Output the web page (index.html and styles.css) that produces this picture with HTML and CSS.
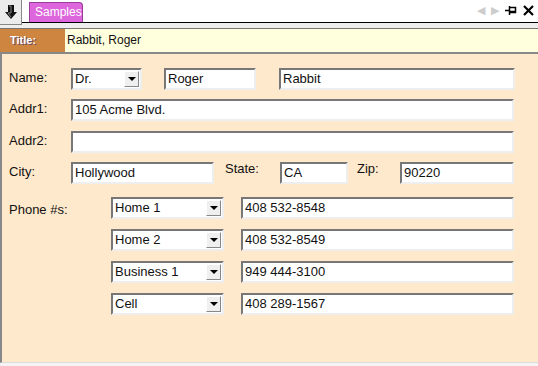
FILE: index.html
```html
<!DOCTYPE html>
<html lang="en">

<head>
    <meta charset="utf-8">
    <link rel="stylesheet" href="styles.css">
</head>

<body>
    <div class="topbar">
        <div class="dropbtn">
            <svg width="14" height="16" viewBox="0 0 14 16">
                <path d="M4 1h6v7h3l-6 7-6-7h3z" fill="#111"/>
                <path d="M5 2h2v7H4l3 4" fill="none" stroke="#888" stroke-width="1"/>
            </svg>
        </div>
        <div class="tab">Samples</div>
        <div class="tools">
            <span class="nav off">&#9664;</span>
            <span class="nav off">&#9654;</span>
            <svg class="pin" width="12" height="11" viewBox="0 0 12 11">
                <path d="M0 5.5h4M4.5 1v9M4.5 2.5h6v5h-6M4.5 6.5h6" fill="none" stroke="#000" stroke-width="1.5"/>
            </svg>
            <svg class="close" width="11" height="11" viewBox="0 0 11 11">
                <path d="M1 1l9 9M10 1l-9 9" stroke="#000" stroke-width="2.2"/>
            </svg>
        </div>
    </div>
    <div class="strip"></div>
    <div class="titlebar">
        <div class="tlabel">Title:</div>
        <div class="tvalue">Rabbit, Roger</div>
    </div>

    <div class="panel">
        <div class="row">
            <label class="lbl">Name:</label>
            <div class="select w-title"><span>Dr.</span><i class="arrow"></i></div>
            <div class="field w-first">Roger</div>
            <div class="field w-last">Rabbit</div>
        </div>
        <div class="row">
            <label class="lbl">Addr1:</label>
            <div class="field w-full">105 Acme Blvd.</div>
        </div>
        <div class="row row-gap">
            <label class="lbl">Addr2:</label>
            <div class="field w-full"></div>
        </div>
        <div class="row">
            <label class="lbl">City:</label>
            <div class="field w-city">Hollywood</div>
            <label class="lbl-up state">State:</label>
            <div class="field w-state">CA</div>
            <label class="lbl-up zip">Zip:</label>
            <div class="field w-zip">90220</div>
        </div>
        <div class="phones">
            <label class="lbl phone-lbl">Phone #s:</label>
            <div class="phone-list">
                <div class="prow">
                    <div class="select w-type"><span>Home 1</span><i class="arrow"></i></div>
                    <div class="field w-num">408 532-8548</div>
                </div>
                <div class="prow">
                    <div class="select w-type"><span>Home 2</span><i class="arrow"></i></div>
                    <div class="field w-num">408 532-8549</div>
                </div>
                <div class="prow">
                    <div class="select w-type"><span>Business 1</span><i class="arrow"></i></div>
                    <div class="field w-num">949 444-3100</div>
                </div>
                <div class="prow">
                    <div class="select w-type"><span>Cell</span><i class="arrow"></i></div>
                    <div class="field w-num">408 289-1567</div>
                </div>
            </div>
        </div>
    </div>
    <div class="bottom"></div>
</body>

</html>
```

FILE: styles.css
```css
body {
    margin: 0;
    width: 538px;
    height: 366px;
    overflow: hidden;
    background: #fff;
    font-family: 'Liberation Sans', Arial, sans-serif;
    font-size: 13px;
    color: #111;
}

.topbar {
    display: flex;
    align-items: flex-start;
    height: 22px;
    border-bottom: 1px solid #000;
    position: relative;
}

.dropbtn {
    width: 21px;
    height: 24px;
    background: #ececec;
    border-right: 1px solid #888;
    border-bottom: 1px solid #888;
    display: flex;
    justify-content: center;
    align-items: center;
    position: relative;
    z-index: 1;
}

.tab {
    margin: 1px 0 0 7px;
    width: 47px;
    height: 19px;
    padding-left: 5px;
    background: #dd66dd;
    border: 1px solid #9a3c9a;
    border-bottom: none;
    border-radius: 0 4px 0 0;
    color: #fff;
    font-size: 12px;
    line-height: 18px;
    position: relative;
    top: 1px;
}

.tools {
    margin-left: auto;
    display: flex;
    align-items: center;
    gap: 6px;
    height: 20px;
    padding-right: 4px;
}

.nav {
    font-size: 11px;
    color: #ccc;
}

.strip {
    height: 5px;
    background: #eee;
    border-bottom: 1px solid #777;
}

.titlebar {
    display: flex;
    height: 23px;
    background: #ffffdd;
    border-bottom: 2px solid #888;
}

.tlabel {
    width: 55px;
    padding-left: 10px;
    background: #cd853f;
    color: #fff;
    font-size: 11px;
    font-weight: bold;
    line-height: 23px;
    text-shadow: 1px 1px 0 #6a4a6a;
}

.tvalue {
    padding-left: 2px;
    font-size: 12px;
    line-height: 23px;
}

.panel {
    height: 309px;
    padding: 14px 0 0 7px;
    box-sizing: border-box;
    background: #ffe9cc;
    border-left: 2px solid #888;
    border-bottom: 1px solid #ddd;
}

.row {
    display: flex;
    align-items: center;
    height: 22px;
    margin-bottom: 9px;
}

.row-gap {
    margin-top: 10px;
}

.lbl {
    width: 62px;
    flex: none;
    margin-top: -4px;
}

.lbl-up {
    align-self: flex-start;
    margin-top: -1px;
}

.field,
.select {
    height: 22px;
    box-sizing: border-box;
    background: #fff;
    border-top: 2px solid #777;
    border-left: 2px solid #777;
    border-right: 2px solid #eee;
    border-bottom: 2px solid #eee;
    padding-left: 2px;
    line-height: 18px;
    flex: none;
}

.select {
    display: flex;
    justify-content: space-between;
    padding-right: 1px;
}

.arrow {
    width: 15px;
    height: 16px;
    margin-top: 1px;
    background: #efefef;
    border-right: 1px solid #888;
    border-bottom: 1px solid #888;
    border-top: 1px solid #fff;
    border-left: 1px solid #fff;
    box-sizing: border-box;
    position: relative;
}

.arrow::after {
    content: "";
    position: absolute;
    left: 3px;
    top: 5px;
    border-left: 4px solid transparent;
    border-right: 4px solid transparent;
    border-top: 4px solid #000;
}

.w-title { width: 71px; }
.w-first { width: 92px; margin-left: 22px; }
.w-last { width: 236px; margin-left: 23px; }
.w-full { width: 443px; }
.w-city { width: 143px; }
.state { margin-left: 11px; width: 55px; }
.w-state { width: 68px; }
.zip { margin-left: 9px; width: 43px; }
.w-zip { width: 114px; }

.phones {
    display: flex;
    margin-top: 13px;
}

.phone-lbl {
    width: 102px;
    margin-top: 5px;
}

.prow {
    display: flex;
    margin-bottom: 10px;
}

.w-type { width: 113px; }
.w-num { width: 273px; margin-left: 17px; }

.bottom {
    height: 4px;
    background: #f4f4f4;
}
```
